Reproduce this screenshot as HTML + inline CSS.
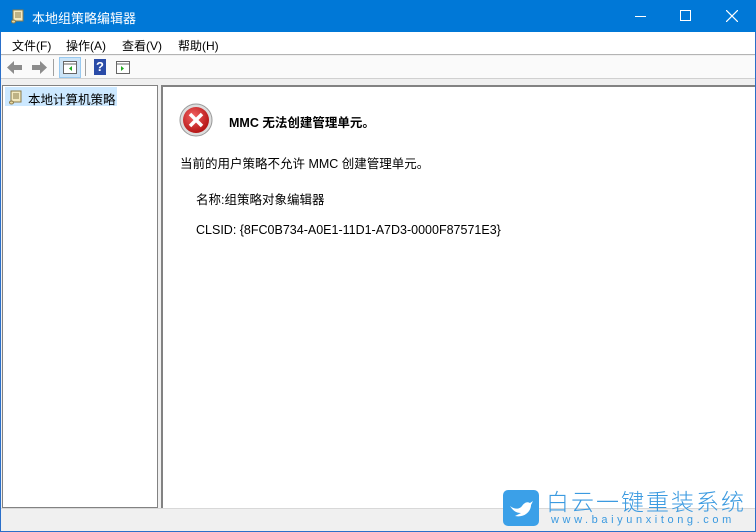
<!DOCTYPE html>
<html><head><meta charset="utf-8"><style>
*{margin:0;padding:0;box-sizing:border-box}
html,body{width:756px;height:532px;overflow:hidden}
body{background:#f0f0f0;font-family:"Liberation Sans","Noto Sans CJK SC",sans-serif;font-size:12px;color:#000;position:relative}
.abs{position:absolute;white-space:nowrap}
</style></head><body>
<div class="abs" style="left:0;top:0;width:756px;height:532px;border:1px solid #2a6fc9;border-top:none"></div>
<div class="abs" style="left:0;top:0;width:756px;height:32px;background:#0078d7;color:#fff">
 <svg class="abs" style="left:10px;top:8px" width="16" height="16" viewBox="0 0 16 16"><path d="M3 2h10v11H3z" fill="#f3e9c0" stroke="#8a7a4a"/><path d="M5 5h6M5 7h6M5 9h6" stroke="#8a7a4a"/><ellipse cx="3.5" cy="13.5" rx="2" ry="1.5" fill="#e8d9a0" stroke="#8a7a4a"/></svg>
 <div class="abs" style="left:32px;top:8px;font-size:13px">本地组策略编辑器</div>
 <div class="abs" style="left:635px;top:16px;width:11px;height:1px;background:#fff"></div>
 <div class="abs" style="left:680px;top:10px;width:11px;height:11px;border:1px solid #fff"></div>
 <svg class="abs" style="left:726px;top:10px" width="12" height="12"><path d="M0 0L12 12M12 0L0 12" stroke="#fff" stroke-width="1.2"/></svg>
</div>
<div class="abs" style="left:1px;top:32px;width:754px;height:23px;background:#fff;border-bottom:1px solid #b4b4b4">
 <span class="abs" style="left:11px;top:5px">文件(F)</span>
 <span class="abs" style="left:65px;top:5px">操作(A)</span>
 <span class="abs" style="left:121px;top:5px">查看(V)</span>
 <span class="abs" style="left:177px;top:5px">帮助(H)</span>
</div>
<div class="abs" style="left:1px;top:56px;width:754px;height:23px;background:#fafafa;border-bottom:1px solid #d0d0d0">
 <svg class="abs" style="left:5px;top:4px" width="42" height="15"><path d="M1 7.5L8 1v4h8v5H8v4z" fill="#8c8c8c"/><path d="M41 7.5L34 1v4h-8v5h8v4z" fill="#8c8c8c"/></svg>
 <div class="abs" style="left:52px;top:3px;width:1px;height:17px;background:#a0a0a0"></div>
 <div class="abs" style="left:58px;top:1px;width:22px;height:21px;background:#cce4f7;border:1px solid #99c9ef"></div>
 <svg class="abs" style="left:62px;top:5px" width="14" height="13"><rect x=".5" y=".5" width="13" height="12" fill="#fff" stroke="#666"/><path d="M1 3h12" stroke="#666"/><path d="M9 5v5L6 7.5z" fill="#2a2"/></svg>
 <div class="abs" style="left:84px;top:3px;width:1px;height:17px;background:#a0a0a0"></div>
 <div class="abs" style="left:93px;top:3px;width:12px;height:16px;background:#2b4ca8;color:#fff;font-weight:bold;font-size:13px;text-align:center;line-height:16px">?</div>
 <svg class="abs" style="left:115px;top:5px" width="14" height="13"><rect x=".5" y=".5" width="13" height="12" fill="#fff" stroke="#666"/><path d="M1 3h12" stroke="#666"/><path d="M5 5v5L8 7.5z" fill="#2a2"/></svg>
</div>
<div class="abs" style="left:2px;top:85px;width:156px;height:423px;background:#fff;border:1px solid #828282">
 <div class="abs" style="left:2px;top:1px;width:112px;height:19px;background:#cce8ff"></div>
 <svg class="abs" style="left:5px;top:3px" width="16" height="16" viewBox="0 0 16 16"><path d="M3 2h10v11H3z" fill="#f3e9c0" stroke="#8a7a4a"/><path d="M5 5h6M5 7h6M5 9h6" stroke="#8a7a4a"/><ellipse cx="3.5" cy="13.5" rx="2" ry="1.5" fill="#e8d9a0" stroke="#8a7a4a"/></svg>
 <span class="abs" style="left:25px;top:3px;font-size:12.5px">本地计算机策略</span>
</div>
<div class="abs" style="left:161px;top:85px;width:594px;height:423px;background:#fff;border-left:2px solid #828282;border-top:2px solid #828282"></div>
<svg class="abs" style="left:179px;top:103px" width="34" height="34"><defs><radialGradient id="g" cx=".4" cy=".35" r=".7"><stop offset="0" stop-color="#f26060"/><stop offset="1" stop-color="#b01010"/></radialGradient></defs><circle cx="17" cy="17" r="16" fill="#ddd" stroke="#999"/><circle cx="17" cy="17" r="13" fill="url(#g)"/><path d="M11 11L23 23M23 11L11 23" stroke="#fff" stroke-width="3.5"/></svg>
<div class="abs" style="left:229px;top:112px;font-weight:bold;font-size:12.5px">MMC 无法创建管理单元。</div>
<div class="abs" style="left:180px;top:153px;font-size:12.5px">当前的用户策略不允许 MMC 创建管理单元。</div>
<div class="abs" style="left:196px;top:189px;font-size:12.5px">名称:组策略对象编辑器</div>
<div class="abs" style="left:196px;top:223px;font-size:12.5px">CLSID: {8FC0B734-A0E1-11D1-A7D3-0000F87571E3}</div>
<div class="abs" style="left:1px;top:508px;width:754px;height:22px;background:#f0f0f0;border-top:1px solid #d8d8d8"></div>
<div class="abs" style="left:503px;top:490px;width:36px;height:36px;background:#3ba0e8;border-radius:5px"></div>
<svg class="abs" style="left:507px;top:497px" width="28" height="22"><path d="M3 9c5 4 10 3 12 0 2-3 5-5 8-3l3-2-2 4c0 6-6 13-16 11l6-3C8 16 5 12 3 9z" fill="#fff"/></svg>
<div class="abs" style="left:546px;top:485px;font-size:23px;line-height:30px;color:#3b9ae0;letter-spacing:2px;font-family:'Noto Sans CJK SC',sans-serif;font-weight:300">白云一键重装系统</div>
<div class="abs" style="left:551px;top:514px;font-size:11px;line-height:13px;color:#3b9ae0;letter-spacing:3.6px">www.baiyunxitong.com</div>
</body></html>
